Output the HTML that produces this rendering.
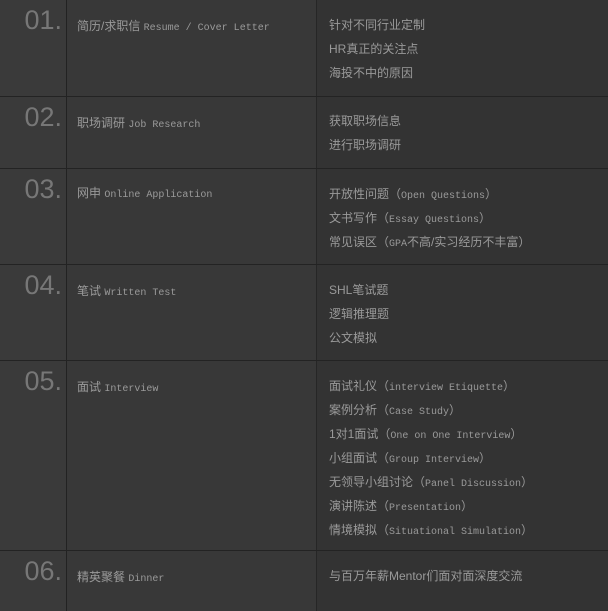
<!DOCTYPE html>
<html><head><meta charset="utf-8"><style>
html,body{margin:0;padding:0;background:#333;}
body{width:608px;height:602px;position:relative;overflow:hidden;font-family:"Liberation Sans","Noto Sans CJK SC",sans-serif;}
.row{position:absolute;left:0;width:608px;border-bottom:1px solid #232323;}
.c1{position:absolute;left:0;top:0;bottom:0;width:66px;background:#3a3a3a;border-right:1px solid #222;}
.c2{position:absolute;left:67px;top:0;bottom:0;width:249px;background:#383838;border-right:1px solid #262626;}
.c3{position:absolute;left:317px;top:0;bottom:0;right:0;background:#333;}
.num{position:absolute;right:4px;top:3px;font-size:27px;color:#777;line-height:34px;}
.lab{position:absolute;left:10px;top:17px;height:18px;font-size:12px;color:#9a9a9a;line-height:18px;white-space:nowrap;}
.en{font-family:"Liberation Mono",monospace;font-size:10px;}
.items{position:absolute;left:12px;top:13px;font-size:12px;color:#9a9a9a;white-space:nowrap;}
.items div{height:24px;line-height:24px;overflow:visible;}
</style></head><body>
<div class="row" style="top:0;height:96px"><div class="c1"><div class="num">01.</div></div><div class="c2"><div class="lab">简历/求职信 <span class="en">Resume / Cover Letter</span></div></div><div class="c3"><div class="items"><div>针对不同行业定制</div><div>HR真正的关注点</div><div>海投不中的原因</div></div></div></div>
<div class="row" style="top:97px;height:71px"><div class="c1"><div class="num">02.</div></div><div class="c2"><div class="lab">职场调研 <span class="en">Job Research</span></div></div><div class="c3"><div class="items" style="top:12px"><div>获取职场信息</div><div>进行职场调研</div></div></div></div>
<div class="row" style="top:169px;height:95px"><div class="c1"><div class="num">03.</div></div><div class="c2"><div class="lab" style="top:15px">网申 <span class="en">Online Application</span></div></div><div class="c3"><div class="items"><div>开放性问题（<span class="en">Open Questions</span>）</div><div>文书写作（<span class="en">Essay Questions</span>）</div><div>常见误区（<span class="en">GPA</span>不高/实习经历不丰富）</div></div></div></div>
<div class="row" style="top:265px;height:95px"><div class="c1"><div class="num">04.</div></div><div class="c2"><div class="lab">笔试 <span class="en">Written Test</span></div></div><div class="c3"><div class="items"><div>SHL笔试题</div><div>逻辑推理题</div><div>公文模拟</div></div></div></div>
<div class="row" style="top:361px;height:189px"><div class="c1"><div class="num">05.</div></div><div class="c2"><div class="lab">面试 <span class="en">Interview</span></div></div><div class="c3"><div class="items"><div>面试礼仪（<span class="en">interview Etiquette</span>）</div><div>案例分析（<span class="en">Case Study</span>）</div><div>1对1面试（<span class="en">One on One Interview</span>）</div><div>小组面试（<span class="en">Group Interview</span>）</div><div>无领导小组讨论（<span class="en">Panel Discussion</span>）</div><div>演讲陈述（<span class="en">Presentation</span>）</div><div>情境模拟（<span class="en">Situational Simulation</span>）</div></div></div></div>
<div class="row" style="top:551px;height:60px;border:none"><div class="c1"><div class="num">06.</div></div><div class="c2"><div class="lab">精英聚餐 <span class="en">Dinner</span></div></div><div class="c3"><div class="items"><div>与百万年薪Mentor们面对面深度交流</div></div></div></div>
</body></html>
